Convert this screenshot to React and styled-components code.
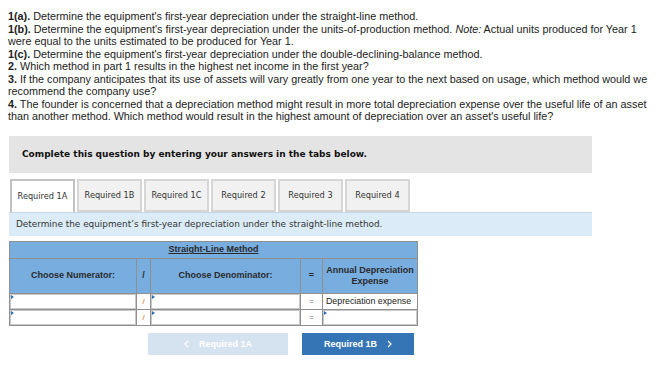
import React from "react";
import styled, { createGlobalStyle } from "styled-components";

const Global = createGlobalStyle`
  html, body { margin: 0; padding: 0; background: #fff; }
  body { width: 659px; height: 367px; overflow: hidden; }
`;

const Page = styled.div`
  padding: 10px 8px 0 8px;
`;

const Intro = styled.div`
  font-family: "Liberation Sans", Arial, sans-serif;
  font-size: 10.8px;
  line-height: 12.5px;
  color: #222;
  width: 648px;
  p { margin: 0; }
  b { font-weight: 700; }
`;

const Widget = styled.div`
  margin: 13px 0 0 1px;
  width: 583px;
`;

const Banner = styled.div`
  background: #e4e4e4;
  height: 37px;
  display: flex;
  align-items: center;
  padding-left: 13px;
  font-family: "DejaVu Sans", Verdana, sans-serif;
  font-weight: 700;
  font-size: 9px;
  color: #111;
`;

const Tabs = styled.div`
  display: flex;
  gap: 2px;
  margin-top: 6px;
  padding-left: 1px;
`;

const Tab = styled.div`
  width: 65px;
  height: 33px;
  box-sizing: border-box;
  display: flex;
  align-items: center;
  justify-content: center;
  font-family: "DejaVu Sans", Verdana, sans-serif;
  font-size: 8.2px;
  color: #333;
  background: ${(p) => (p.$active ? "#fff" : "#f1f1f1")};
  border: 2px solid ${(p) => (p.$active ? "#c2c2c2" : "#d6d6d6")};
  border-bottom: ${(p) => (p.$active ? "none" : "2px solid #d6d6d6")};
  margin-bottom: ${(p) => (p.$active ? "-1px" : "0")};
  position: relative;
  z-index: 1;
`;

const Prompt = styled.div`
  background: #dbecf8;
  border-top: 1px solid #c9d6df;
  height: 23px;
  display: flex;
  align-items: center;
  padding-left: 7px;
  font-family: "DejaVu Sans", Verdana, sans-serif;
  font-size: 8.9px;
  color: #333;
`;

const Grid = styled.div`
  margin-top: 5px;
  display: grid;
  grid-template-columns: 126px 13px 149px 21px 94px;
  grid-template-rows: 16px 34px 15px 15px;
  gap: 1px;
  padding: 1px;
  width: max-content;
  background: #8f8f8f;
  font-family: "Liberation Sans", Arial, sans-serif;
`;

const Head = styled.div`
  background: #78ade0;
  display: flex;
  align-items: center;
  justify-content: center;
  text-align: center;
  font-weight: 700;
  font-size: 9px;
  line-height: 10.5px;
  color: #2a2a2a;
  grid-column: ${(p) => p.$span || "auto"};
  u { text-decoration-thickness: 1px; text-underline-offset: 1px; }
`;

const Input = styled.div`
  background: #fff;
  position: relative;
  box-shadow: inset 0 0 0 1px #c9c9c9;
  &::before {
    content: "";
    position: absolute;
    left: 1px;
    top: 1px;
    border-left: 3px solid #2f6cb3;
    border-top: 2px solid transparent;
    border-bottom: 2px solid transparent;
  }
`;

const Op = styled.div`
  background: #fff;
  display: flex;
  align-items: center;
  justify-content: center;
  font-size: 8px;
  color: ${(p) => p.$color || "#777"};
`;

const Label = styled.div`
  background: #fff;
  display: flex;
  align-items: center;
  padding-left: 3px;
  font-size: 8.8px;
  color: #222;
  white-space: nowrap;
  overflow: hidden;
`;

const Nav = styled.div`
  display: flex;
  gap: 14px;
  margin-top: 7px;
  margin-left: 139px;
`;

const NavButton = styled.div`
  width: ${(p) => p.$w}px;
  height: 22px;
  display: flex;
  align-items: center;
  justify-content: center;
  gap: 10px;
  background: ${(p) => (p.$disabled ? "#d5e2f0" : "#3574b5")};
  color: #fff;
  font-family: "Liberation Sans", Arial, sans-serif;
  font-weight: 700;
  font-size: 9px;
`;

const Chevron = ({ dir }) => (
  <svg width="5" height="8" viewBox="0 0 5 8">
    <path
      d={dir === "left" ? "M4 1 L1 4 L4 7" : "M1 1 L4 4 L1 7"}
      fill="none"
      stroke="#fff"
      strokeWidth="1.2"
    />
  </svg>
);

const tabs = ["Required 1A", "Required 1B", "Required 1C", "Required 2", "Required 3", "Required 4"];

export default function App() {
  return (
    <Page>
      <Global />
      <Intro>
        <p><b>1(a).</b> Determine the equipment's first-year depreciation under the straight-line method.</p>
        <p><b>1(b).</b> Determine the equipment's first-year depreciation under the units-of-production method. <i>Note:</i> Actual units produced for Year 1 were equal to the units estimated to be produced for Year 1.</p>
        <p><b>1(c).</b> Determine the equipment's first-year depreciation under the double-declining-balance method.</p>
        <p><b>2.</b> Which method in part 1 results in the highest net income in the first year?</p>
        <p><b>3.</b> If the company anticipates that its use of assets will vary greatly from one year to the next based on usage, which method would we recommend the company use?</p>
        <p><b>4.</b> The founder is concerned that a depreciation method might result in more total depreciation expense over the useful life of an asset than another method. Which method would result in the highest amount of depreciation over an asset's useful life?</p>
      </Intro>
      <Widget>
        <Banner>Complete this question by entering your answers in the tabs below.</Banner>
        <Tabs>
          {tabs.map((t, i) => (
            <Tab key={t} $active={i === 0}>{t}</Tab>
          ))}
        </Tabs>
        <Prompt>Determine the equipment’s first-year depreciation under the straight-line method.</Prompt>
        <Grid>
          <Head $span="1 / -1"><u>Straight-Line Method</u></Head>
          <Head>Choose Numerator:</Head>
          <Head>/</Head>
          <Head>Choose Denominator:</Head>
          <Head>=</Head>
          <Head>Annual Depreciation<br />Expense</Head>
          <Input />
          <Op $color="#c0692a">/</Op>
          <Input />
          <Op>=</Op>
          <Label>Depreciation expense</Label>
          <Input />
          <Op $color="#c0692a">/</Op>
          <Input />
          <Op>=</Op>
          <Input />
        </Grid>
        <Nav>
          <NavButton $w={140} $disabled>
            <Chevron dir="left" />
            <span>Required 1A</span>
          </NavButton>
          <NavButton $w={112}>
            <span>Required 1B</span>
            <Chevron dir="right" />
          </NavButton>
        </Nav>
      </Widget>
    </Page>
  );
}
